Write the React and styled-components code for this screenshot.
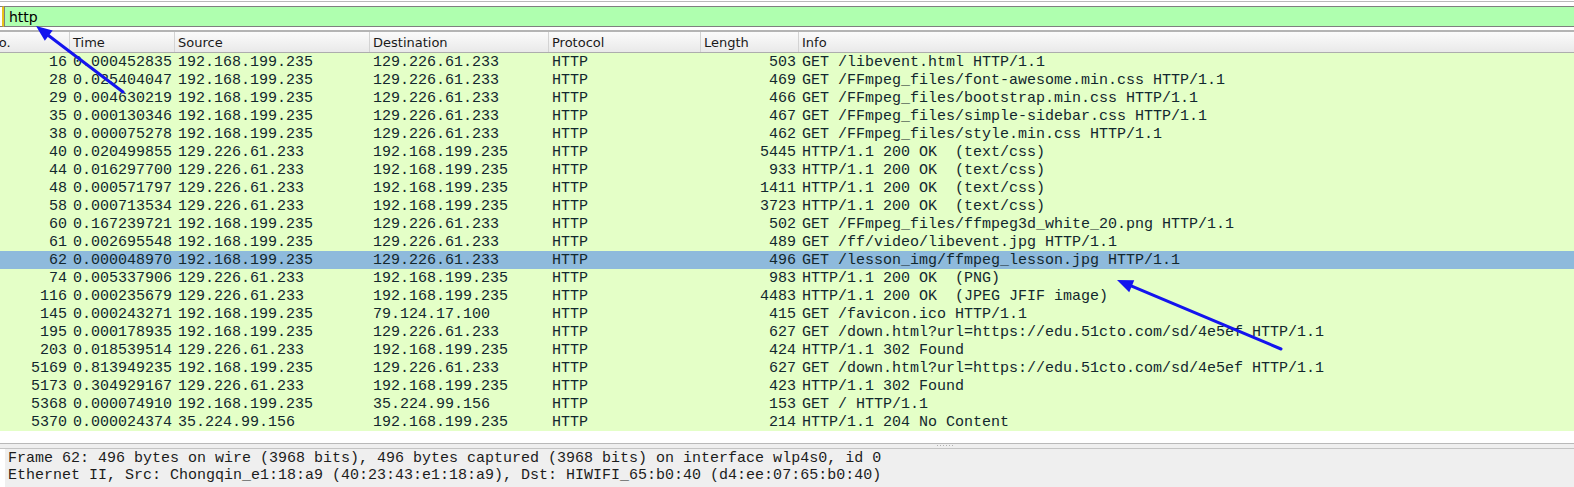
import React from "react";
import styled, { createGlobalStyle } from "styled-components";

const rowFg = "#12272e";
const mono = `"Liberation Mono", "DejaVu Sans Mono", monospace`;
const sans = `"DejaVu Sans", "Noto Sans", sans-serif`;

const GlobalStyle = createGlobalStyle`
  html, body {
    margin: 0;
    padding: 0;
    background: #ffffff;
  }
  #root {
    height: 487px;
    overflow: hidden;
  }
`;

const Window = styled.div`
  position: relative;
  height: 487px;
  display: flex;
  flex-direction: column;
  overflow: hidden;
`;

const FilterArea = styled.div`
  margin-top: 1px;
  border-top: 1px solid #b9b9b9;
  padding: 4px 0 3px;
`;

const FilterBar = styled.div`
  display: flex;
  height: 21px;
`;

const BookmarkStub = styled.div`
  width: 2px;
  background: #ffffff;
  border-right: 2px solid #e8c21a;
  border-top: 1px solid #7f7f7f;
  border-bottom: 1px solid #7f7f7f;
`;

const FilterInput = styled.div`
  flex: 1;
  display: flex;
  align-items: center;
  padding-left: 4px;
  background: #afffaf;
  border: 1px solid #7f7f7f;
  border-right: none;
  font-family: ${sans};
  font-size: 14px;
  color: #000000;
`;

const PacketList = styled.div`
  border-top: 2px solid #b4b4b4;
  overflow: hidden;
  flex: none;
  height: 411px;
`;

const Table = styled.div`
  margin-left: -14px;
  width: 1588px;
`;

const cols = "84px 105px 195px 179px 152px 98px 1fr";

const HeaderRow = styled.div`
  display: grid;
  grid-template-columns: ${cols};
  height: 20px;
  background: linear-gradient(#fbfbfb, #e9e9e9);
  border-bottom: 1px solid #adadad;
`;

const HeaderCell = styled.div`
  display: flex;
  align-items: center;
  padding-left: 3px;
  font-family: ${sans};
  font-size: 13px;
  color: #1a1a1a;
  border-right: ${(p) => (p.$last ? "none" : "1px solid #d3d3d3")};
  white-space: nowrap;
`;

const Row = styled.div`
  display: grid;
  grid-template-columns: ${cols};
  height: 18px;
  background: ${(p) => (p.$selected ? "#8ebadc" : "#e4ffc7")};
  color: ${rowFg};
  font-family: ${mono};
  font-size: 15px;
`;

const Cell = styled.div`
  padding: 1px 3px 0;
  line-height: 17px;
  white-space: pre;
  overflow: hidden;
  text-align: ${(p) => (p.$right ? "right" : "left")};
`;

const Splitter = styled.div`
  position: relative;
  height: 4px;
  background: #efefef;
  border-top: 1px solid #b9b9b9;
  border-bottom: 1px solid #c4c4c4;
`;

const Grip = styled.div`
  position: absolute;
  left: 937px;
  top: 1px;
  width: 16px;
  height: 1px;
  background: repeating-linear-gradient(90deg, #b0b0b0 0 1px, transparent 1px 3px);
`;

const DetailsWrap = styled.div`
  flex: 1;
  padding-left: 5px;
  display: flex;
`;

const Details = styled.div`
  flex: 1;
  background: #efefef;
  padding: 1px 0 0 3px;
  font-family: ${mono};
  font-size: 15px;
  line-height: 17px;
  color: #1c1c1c;
  white-space: pre;
`;

const Overlay = styled.svg`
  position: absolute;
  left: 0;
  top: 0;
  pointer-events: none;
`;

const headers = ["No.", "Time", "Source", "Destination", "Protocol", "Length", "Info"];

const A = "192.168.199.235";
const B = "129.226.61.233";

const packets = [
  ["16", "0.000452835", A, B, "503", "GET /libevent.html HTTP/1.1"],
  ["28", "0.025404047", A, B, "469", "GET /FFmpeg_files/font-awesome.min.css HTTP/1.1"],
  ["29", "0.004630219", A, B, "466", "GET /FFmpeg_files/bootstrap.min.css HTTP/1.1"],
  ["35", "0.000130346", A, B, "467", "GET /FFmpeg_files/simple-sidebar.css HTTP/1.1"],
  ["38", "0.000075278", A, B, "462", "GET /FFmpeg_files/style.min.css HTTP/1.1"],
  ["40", "0.020499855", B, A, "5445", "HTTP/1.1 200 OK  (text/css)"],
  ["44", "0.016297700", B, A, "933", "HTTP/1.1 200 OK  (text/css)"],
  ["48", "0.000571797", B, A, "1411", "HTTP/1.1 200 OK  (text/css)"],
  ["58", "0.000713534", B, A, "3723", "HTTP/1.1 200 OK  (text/css)"],
  ["60", "0.167239721", A, B, "502", "GET /FFmpeg_files/ffmpeg3d_white_20.png HTTP/1.1"],
  ["61", "0.002695548", A, B, "489", "GET /ff/video/libevent.jpg HTTP/1.1"],
  ["62", "0.000048970", A, B, "496", "GET /lesson_img/ffmpeg_lesson.jpg HTTP/1.1"],
  ["74", "0.005337906", B, A, "983", "HTTP/1.1 200 OK  (PNG)"],
  ["116", "0.000235679", B, A, "4483", "HTTP/1.1 200 OK  (JPEG JFIF image)"],
  ["145", "0.000243271", A, "79.124.17.100", "415", "GET /favicon.ico HTTP/1.1"],
  ["195", "0.000178935", A, B, "627", "GET /down.html?url=https://edu.51cto.com/sd/4e5ef HTTP/1.1"],
  ["203", "0.018539514", B, A, "424", "HTTP/1.1 302 Found"],
  ["5169", "0.813949235", A, B, "627", "GET /down.html?url=https://edu.51cto.com/sd/4e5ef HTTP/1.1"],
  ["5173", "0.304929167", B, A, "423", "HTTP/1.1 302 Found"],
  ["5368", "0.000074910", A, "35.224.99.156", "153", "GET / HTTP/1.1"],
  ["5370", "0.000024374", "35.224.99.156", A, "214", "HTTP/1.1 204 No Content"],
];

// arrow drawn tail -> tip, filled head at the tip
function Arrow({ x1, y1, x2, y2, color }) {
  const dx = x2 - x1;
  const dy = y2 - y1;
  const len = Math.hypot(dx, dy);
  const ux = dx / len;
  const uy = dy / len;
  const headLen = 16;
  const headW = 6.5;
  const bx = x2 - ux * headLen;
  const by = y2 - uy * headLen;
  const pts = [
    [x2, y2],
    [bx - uy * headW, by + ux * headW],
    [bx + uy * headW, by - ux * headW],
  ]
    .map((p) => p.join(","))
    .join(" ");
  return (
    <g>
      <line x1={x1} y1={y1} x2={bx + ux * 2} y2={by + uy * 2} stroke={color} strokeWidth="3" strokeLinecap="round" />
      <polygon points={pts} fill={color} />
    </g>
  );
}

export default function App() {
  return (
    <>
      <GlobalStyle />
      <Window>
        <FilterArea>
          <FilterBar>
            <BookmarkStub />
            <FilterInput>http</FilterInput>
          </FilterBar>
        </FilterArea>

        <PacketList>
          <Table>
            <HeaderRow>
              {headers.map((h, i) => (
                <HeaderCell key={h} $last={i === headers.length - 1}>
                  {h}
                </HeaderCell>
              ))}
            </HeaderRow>
            {packets.map((p) => (
              <Row key={p[0]} $selected={p[0] === "62"}>
                <Cell $right>{p[0]}</Cell>
                <Cell>{p[1]}</Cell>
                <Cell>{p[2]}</Cell>
                <Cell>{p[3]}</Cell>
                <Cell>HTTP</Cell>
                <Cell $right>{p[4]}</Cell>
                <Cell>{p[5]}</Cell>
              </Row>
            ))}
          </Table>
        </PacketList>

        <Splitter>
          <Grip />
        </Splitter>

        <DetailsWrap>
          <Details>
            {"Frame 62: 496 bytes on wire (3968 bits), 496 bytes captured (3968 bits) on interface wlp4s0, id 0\n"}
            {"Ethernet II, Src: Chongqin_e1:18:a9 (40:23:43:e1:18:a9), Dst: HIWIFI_65:b0:40 (d4:ee:07:65:b0:40)"}
          </Details>
        </DetailsWrap>

        <Overlay width="1574" height="487" viewBox="0 0 1574 487">
          <Arrow x1={123} y1={92} x2={36} y2={26} color="#1414ee" />
          <Arrow x1={1281} y1={349} x2={1117} y2={280} color="#1414ee" />
        </Overlay>
      </Window>
    </>
  );
}
